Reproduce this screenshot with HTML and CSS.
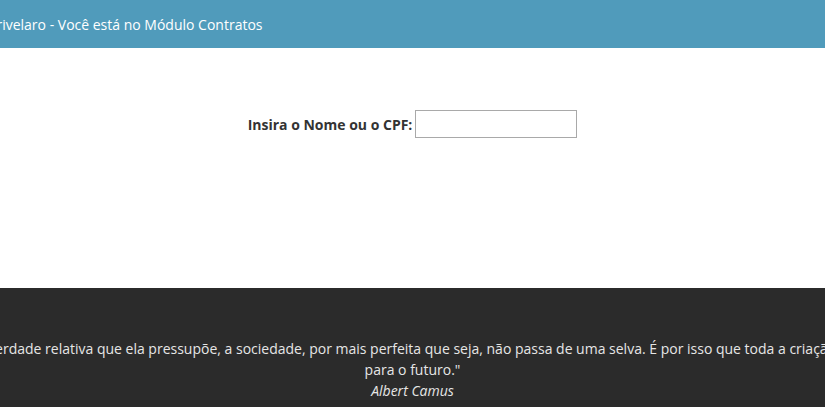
FILE: index.html
```html
<!DOCTYPE html>
<html lang="pt-BR">
<head>
<meta charset="utf-8">
<title>Módulo Contratos</title>
<link rel="stylesheet" href="styles.css">
</head>
<body>
<div class="page">
  <header class="topbar">
    <div class="wide topbar-inner">
      <span class="welcome">Olá, Fulano Trivelaro - Você está no Módulo Contratos</span>
    </div>
  </header>
  <main class="main">
    <form class="search">
      <label class="search-label" for="busca">Insira o Nome ou o CPF:</label>
      <input class="search-input" id="busca" type="text">
    </form>
  </main>
  <footer class="footer">
    <div class="wide quote">
      <p class="quote-text">"Sem a cultura, e a liberdade relativa que ela pressupõe, a sociedade, por mais perfeita que seja, não passa de uma selva. É por isso que toda a criação autêntica é um dom para o futuro."</p>
      <p class="quote-author">Albert Camus</p>
    </div>
  </footer>
</div>
</body>
</html>
```
FILE: styles.css
```css
html, body {
  margin: 0;
  padding: 0;
  overflow: hidden;
  background: #fff;
}
body {
  font-family: "Open Sans", "Liberation Sans", sans-serif;
  font-size: 14px;
  color: #333;
}
.page {
  width: 825px;
  height: 407px;
  display: flex;
  flex-direction: column;
}
.wide {
  width: 1170px;
  margin-left: -172.5px;
  padding: 0 15px;
  box-sizing: border-box;
}
.topbar {
  background: #509bbb;
  height: 48px;
  display: flex;
  align-items: center;
  flex: none;
}
.topbar-inner {
  padding-left: 84px;
}
.welcome {
  color: #fff;
  font-size: 14px;
}
.main {
  height: 240px;
  flex: none;
  display: flex;
  justify-content: center;
  padding-top: 62px;
  box-sizing: border-box;
}
.search {
  display: flex;
  align-items: center;
  height: 28px;
  gap: 3px;
}
.search-label {
  font-weight: bold;
  font-size: 14px;
  color: #333;
}
.search-input {
  width: 162px;
  height: 28px;
  box-sizing: border-box;
  border: 1px solid #a9a9a9;
  margin: 0;
  padding: 2px 4px;
  font: inherit;
}
.footer {
  flex: 1;
  background: #2b2b2b;
  color: #e6e6e6;
  padding-top: 50px;
}
.quote {
  text-align: center;
  line-height: 21px;
}
.quote p {
  margin: 0;
}
.quote-author {
  font-style: italic;
}
```
